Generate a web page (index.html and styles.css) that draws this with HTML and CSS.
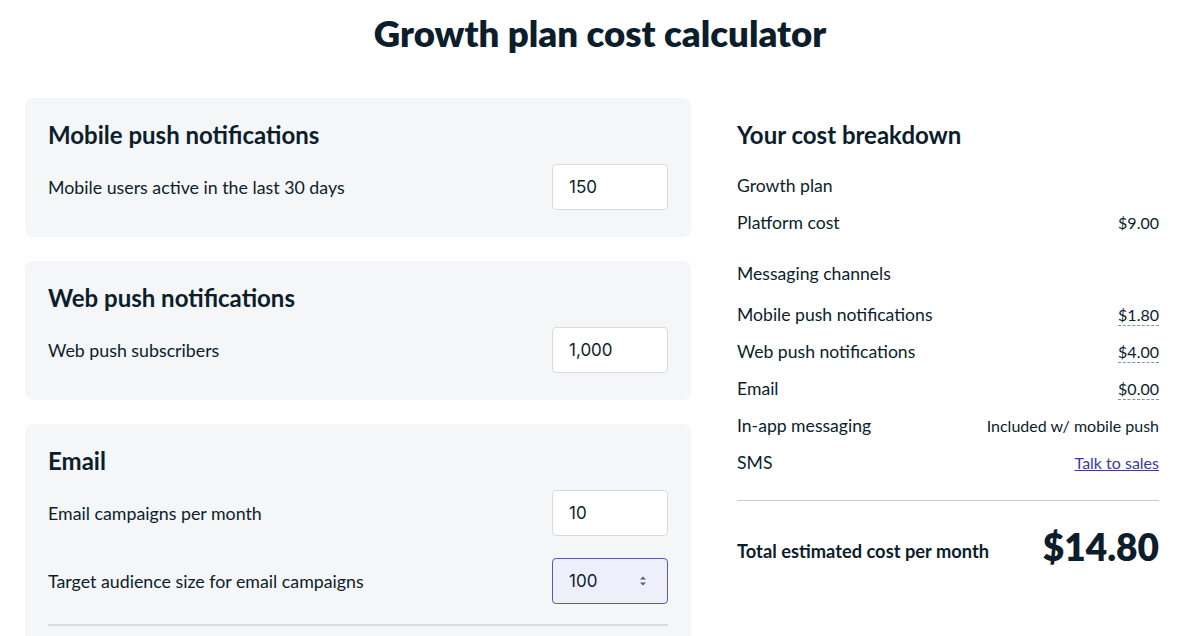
FILE: index.html
```html
<!DOCTYPE html>
<html lang="en">
<head>
  <meta charset="UTF-8" />
  <meta name="viewport" content="width=device-width, initial-scale=1.0" />
  <title>Growth plan cost calculator</title>
  <link rel="stylesheet" href="styles.css">
</head>
<body>
  <h1 class="page-title">Growth plan cost calculator</h1>

  <div class="calculator">
    <div class="inputs">
      <section class="card">
        <h2>Mobile push notifications</h2>
        <label class="field">
          <span>Mobile users active in the last 30 days</span>
          <input type="number" value="150" />
        </label>
      </section>

      <section class="card">
        <h2>Web push notifications</h2>
        <label class="field">
          <span>Web push subscribers</span>
          <input type="text" value="1,000" />
        </label>
      </section>

      <section class="card">
        <h2>Email</h2>
        <label class="field">
          <span>Email campaigns per month</span>
          <input type="number" value="10" />
        </label>
        <label class="field">
          <span>Target audience size for email campaigns</span>
          <span class="number-input is-focused">
            100
            <svg width="8" height="14" viewBox="0 0 8 14"><path d="M1 5.5 L4 2.5 L7 5.5 Z M1 8.5 L4 11.5 L7 8.5 Z" fill="#5b5f66"/></svg>
          </span>
        </label>
        <hr class="card-divider" />
      </section>
    </div>

    <aside class="breakdown">
      <h2>Your cost breakdown</h2>

      <div class="group">
        <div class="group-title">Growth plan</div>
        <div class="line">
          <span>Platform cost</span>
          <span class="amount">$9.00</span>
        </div>
      </div>

      <div class="group channels">
        <div class="group-title">Messaging channels</div>
        <div class="line">
          <span>Mobile push notifications</span>
          <span class="amount dotted">$1.80</span>
        </div>
        <div class="line">
          <span>Web push notifications</span>
          <span class="amount dotted">$4.00</span>
        </div>
        <div class="line">
          <span>Email</span>
          <span class="amount dotted">$0.00</span>
        </div>
        <div class="line">
          <span>In-app messaging</span>
          <span class="amount">Included w/ mobile push</span>
        </div>
        <div class="line">
          <span>SMS</span>
          <a class="amount" href="#">Talk to sales</a>
        </div>
      </div>

      <div class="total">
        <span>Total estimated cost per month</span>
        <strong>$14.80</strong>
      </div>
    </aside>
  </div>
</body>
</html>
```

FILE: styles.css
```css
body {
  margin: 0;
  font-family: 'Lato', 'Noto Sans', sans-serif;
  color: #0c1d2c;
  background: #fff;
}
.page-title {
  margin: 10px 0 42px;
  text-align: center;
  font-size: 36.6px;
  line-height: 46px;
  font-weight: 800;
}
.calculator {
  display: grid;
  grid-template-columns: 666px 422px;
  column-gap: 46px;
  padding-left: 25px;
}
.inputs {
  display: flex;
  flex-direction: column;
  gap: 24px;
}
.card {
  background: #f4f6f8;
  border-radius: 8px;
  padding: 23px 23px 27px;
}
.card h2 {
  margin: 0 0 15px;
  font-size: 24px;
  line-height: 28px;
  font-weight: 700;
}
.field {
  display: flex;
  align-items: center;
  justify-content: space-between;
  font-size: 17.8px;
}
.field + .field {
  margin-top: 22px;
}
.field input,
.number-input {
  box-sizing: border-box;
  width: 116px;
  height: 46px;
  padding: 0 16px;
  border: 1px solid #d7dbe0;
  border-radius: 4px;
  background: #fff;
  font-family: 'Inter', 'Noto Sans', sans-serif;
  font-size: 17px;
  color: #0c1d2c;
  outline: none;
}
.field input::-webkit-inner-spin-button {
  display: none;
}
.number-input {
  display: flex;
  align-items: center;
  justify-content: space-between;
  padding-right: 20px;
}
.number-input.is-focused {
  background: #efeffc;
  border-color: #5d58a8;
}
.card-divider {
  margin: 20px 0 0;
  border: 0;
  border-top: 2px solid #d8dbdf;
}
.breakdown h2 {
  margin: 23px 0 19px;
  font-size: 24px;
  line-height: 28px;
  font-weight: 700;
}
.group-title,
.line {
  display: flex;
  justify-content: space-between;
  align-items: baseline;
  font-size: 17.6px;
  line-height: 24px;
  padding: 6px 0;
}
.line {
  padding: 6.5px 0;
}
.channels {
  margin-top: 15px;
}
.channels .group-title {
  margin-bottom: 4px;
}
.amount {
  font-size: 16px;
}
.amount.dotted {
  border-bottom: 1px dashed #8a9199;
  line-height: 20px;
}
a.amount {
  color: #3d3a9c;
  text-decoration: underline;
}
.total {
  display: flex;
  justify-content: space-between;
  align-items: center;
  margin-top: 19px;
  padding-top: 22px;
  border-top: 1px solid #c9ccd2;
}
.total span {
  font-size: 18.3px;
  font-weight: 700;
  padding-top: 8px;
}
.total strong {
  font-size: 37px;
  line-height: 48px;
  font-weight: 800;
}
```
